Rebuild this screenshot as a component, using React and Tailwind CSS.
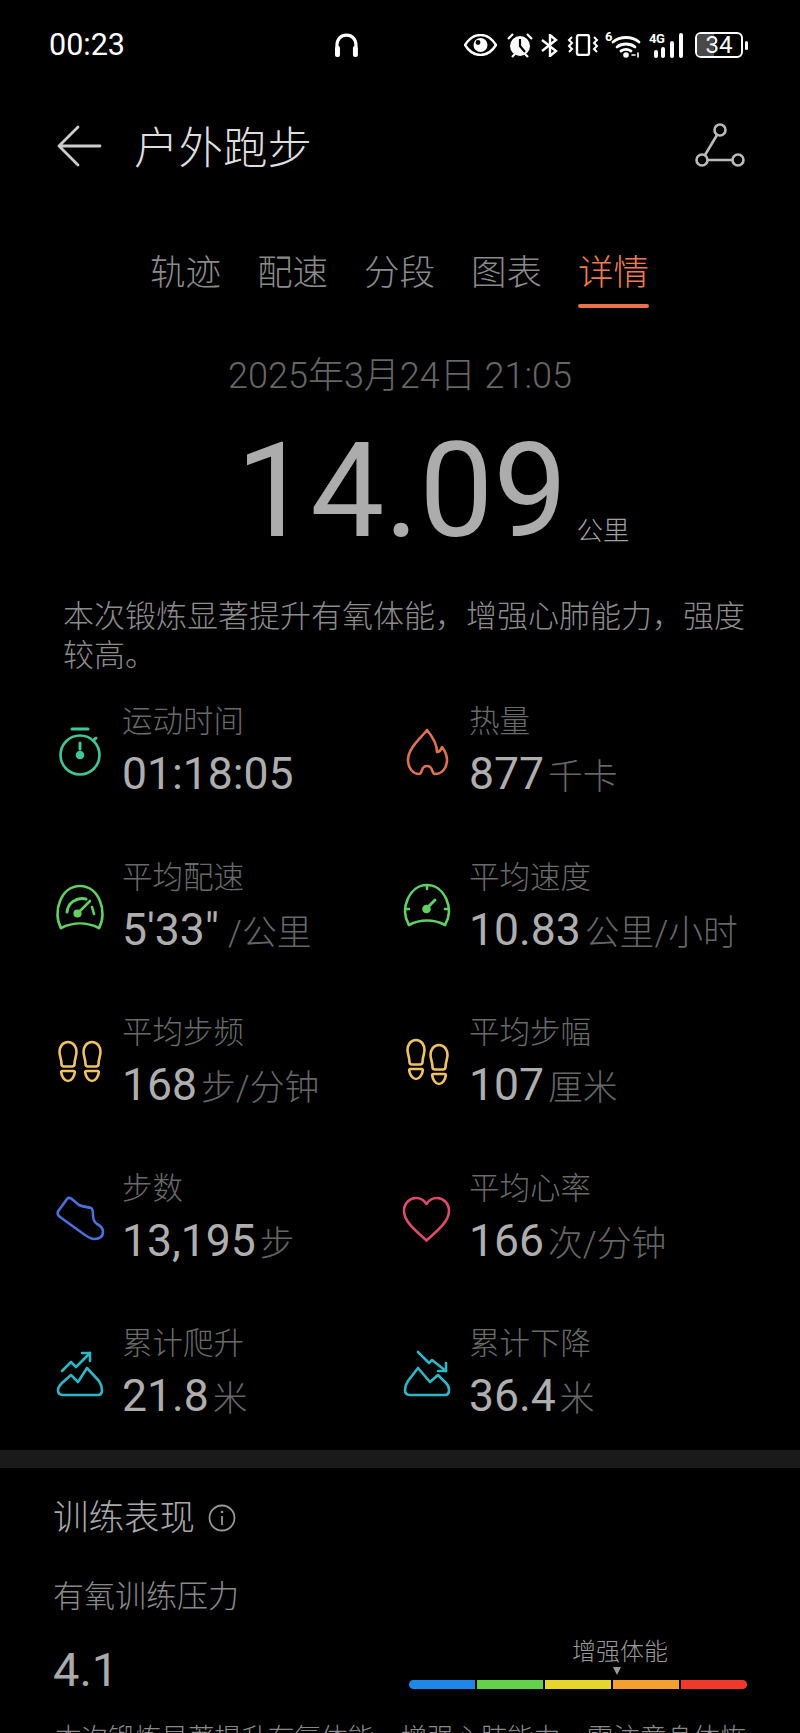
import React from "react";

function Ic({ children, cls }) {
  return (
    <svg viewBox="0 0 50 50" className={`w-[50px] h-[50px] shrink-0 overflow-visible ${cls}`} fill="none" stroke="currentColor" strokeWidth="2.6" strokeLinecap="round" strokeLinejoin="round">
      {children}
    </svg>
  );
}
const Stopwatch = () => (
  <Ic cls="text-[#3fc79b]">
    <path d="M17 1h16" strokeWidth="3" />
    <circle cx="25" cy="27" r="19.5" />
    <path d="M39 12l2-2" strokeWidth="3" />
    <path d="M25 15v6" strokeWidth="3" />
    <circle cx="25" cy="27" r="3" fill="currentColor" />
  </Ic>
);
const Flame = () => (
  <Ic cls="text-[#df7050]">
    <path d="M25 2C19 10 6 20 6 32c0 8 5 14 11 14 2 0 2-2 3-4 1-3 3-4 5-4s4 1 5 4c1 2 1 4 3 4 7 0 12-6 12-14 0-5-2-9-5-13-1 3-3 5-5 5 0-8-5-16-10-22z" />
  </Ic>
);
const GaugeA = () => (
  <Ic cls="text-[#62cf64]">
    <path d="M6 44C-3 28 6 2 25 2s28 26 19 42" />
    <path d="M6 44c12-6 26-6 38 0" />
    <path d="M12 28c1-9 9-15 19-13" strokeWidth="3" />
    <path d="M37 23l2 7" />
    <path d="M23 29l12-12" />
    <circle cx="22.5" cy="29.5" r="2.8" fill="currentColor" />
  </Ic>
);
const GaugeB = () => (
  <Ic cls="text-[#62cf64]">
    <path d="M7 41C-3 24 8 1 25 1s28 23 18 40" />
    <path d="M7 41c11-6 25-6 36 0" />
    <path d="M25 1v4M3 25h4M43 25h4" />
    <path d="M25 24l8-8" strokeWidth="3" />
    <circle cx="24.5" cy="25" r="3" fill="currentColor" />
  </Ic>
);
const Foot = ({ x, y }) => (
  <g transform={`translate(${x} ${y})`}>
    <path d="M9 0C3.500 0 .5 5 .5 10c0 4 2 7 2 12 0 1.500 1 2.500 2.500 2.500h8c1.500 0 2.500-1 2.500-2.500 0-5 2-8 2-12 0-5-3-10-8.500-10z" />
    <path d="M3.500 29h11c1 0 1.500 .5 1.300 1.500-.5 4-3.300 8.500-6.800 8.500s-6.300-4.500-6.800-8.500c-.2-1 .3-1.500 1.300-1.500z" />
  </g>
);
const FeetA = () => (
  <Ic cls="text-[#f0c162]">
    <Foot x={4} y={3} />
    <Foot x={28} y={3} />
  </Ic>
);
const FeetB = () => (
  <Ic cls="text-[#f0c162]">
    <Foot x={5} y={1} />
    <Foot x={28} y={6} />
  </Ic>
);
const Shoe = () => (
  <Ic cls="text-[#4a70dc]">
    <path d="M12 4c2-2 4-1 6 1l6 5c4 2 9 2 12 3 2 1 2 4 2 7 0 4 1 7 4 9 4 2 6 4 6 8 0 5-4 7-9 7-3 0-6-2-9-4L5 22c-3-2-3-5-1-7z" />
  </Ic>
);
const Heart = () => (
  <Ic cls="text-[#df4a6c]">
    <path d="M24.500 45.500C18 39 2 28 2 16 2 8 8 3 14 3c4 0 8 2 10.500 6C27 5 31 3 35 3c6 0 12 5 12 13 0 12-16 23-22.500 29.500z" />
  </Ic>
);
const Up = () => (
  <Ic cls="text-[#2db7c6]">
    <path d="M8 45c-4 0-5-2-5-5 0-3 2-5 4-7l9-8 7 7 9-14 12 13c2 3 3 5 3 9 0 3-1 5-4 5z" />
    <path d="M7 21l9-9 5 5L35 3" />
    <path d="M27 3h8v8" />
  </Ic>
);
const Down = () => (
  <Ic cls="text-[#2db7c6]">
    <path d="M8 45c-4 0-5-2-5-5 0-4 1-6 3-9l10-13 12 14 8-7 8 8c2 2 3 4 3 7 0 3-1 5-4 5z" />
    <path d="M16 2l11 11 3-3 14 11" />
    <path d="M44 13v8h-8" />
  </Ic>
);

function Metric({ icon, label, value, unit, slash }) {
  return (
    <div className="flex items-center gap-[17px] h-[102px]">
      {icon}
      <div className="flex flex-col">
        <div className="h-[40px] leading-[40px] text-[30.500px] font-light text-[#6a6a6a] whitespace-nowrap">{label}</div>
        <div className="h-[60px] mt-[2px] flex items-baseline whitespace-nowrap">
          <span className="text-[44.500px] leading-[60px] text-[#aeaeae]">{value}</span>
          <span className={`${slash ? "ml-[9px]" : "ml-[4px]"} text-[34.800px] font-light leading-[60px] text-[#666666]`}>{unit}</span>
        </div>
      </div>
    </div>
  );
}

function StatusIcons() {
  return (
    <div className="flex items-center text-white">
      <svg width="33" height="22" viewBox="0 0 33 22" className="mr-[10px]">
        <path d="M1 11C6 3 11 1 16.500 1S27 3 32 11c-5 8-10 10-15.500 10S6 19 1 11z" fill="none" stroke="currentColor" strokeWidth="2.400" />
        <circle cx="16.500" cy="11" r="7" fill="currentColor" />
        <circle cx="14" cy="8.500" r="2.400" fill="#000" />
      </svg>
      <svg width="26" height="25" viewBox="0 0 26 25" className="mr-[8px]" fill="currentColor">
        <circle cx="13" cy="13" r="10" />
        <path d="M13 6v7l5 6" stroke="#000" strokeWidth="2.200" fill="none" />
        <path d="M1 6l5-5M25 6l-5-5M5 24l3-3M21 24l-3-3" stroke="currentColor" strokeWidth="2.200" fill="none" />
      </svg>
      <svg width="18" height="23" viewBox="0 0 18 23" className="mr-[8px]" fill="none" stroke="currentColor" strokeWidth="2.400">
        <path d="M1 6l14 11-6 5V1l6 5L1 17" />
      </svg>
      <svg width="32" height="22" viewBox="0 0 32 22" className="mr-[6px]" fill="none" stroke="currentColor" strokeWidth="2">
        <rect x="10" y="1" width="12" height="20" rx="2" strokeWidth="2.400" />
        <path d="M5 3l-3 3 3 3-3 3 3 3-3 3M27 3l3 3-3 3 3 3-3 3 3 3" />
      </svg>
      <div className="relative w-[38px] h-[25px] mr-[6px]">
        <span className="absolute left-0 top-[-3px] text-[13px] leading-[14px] font-bold">6</span>
        <svg width="38" height="25" viewBox="0 0 38 25" fill="none" stroke="currentColor" strokeWidth="2.800" strokeLinecap="round">
          <path d="M8 9c7-6 19-6 26 0M12 14c5-4 13-4 18 0M16 18c3-2 7-2 10 0" />
          <circle cx="21" cy="22" r="2.800" fill="currentColor" stroke="none" />
          <path d="M27 22h3M33 20v4" strokeWidth="1.600" />
        </svg>
      </div>
      <div className="relative w-[37px] h-[25px] mr-[9px]">
        <span className="absolute left-0 top-[-1px] text-[13px] leading-[14px] font-bold tracking-[-0.5px]">4G</span>
        <svg width="37" height="25" viewBox="0 0 37 25" fill="currentColor">
          <rect x="5" y="17" width="4" height="8" rx="2" />
          <rect x="12" y="14" width="4" height="11" rx="2" />
          <rect x="21" y="8" width="4" height="17" rx="2" />
          <rect x="30" y="0" width="4" height="25" rx="2" />
        </svg>
      </div>
      <div className="relative w-[48px] h-[26px] rounded-[6px] border-2 border-white overflow-hidden flex items-center justify-center">
        <div className="absolute left-0 top-0 bottom-0 w-[17px] bg-[#4a4a4a]" />
        <span className="relative text-[24px] leading-none">34</span>
      </div>
      <div className="ml-[2px] w-[3px] h-[9px] rounded-full bg-white" />
    </div>
  );
}

export default function App() {
  const tabs = ["轨迹", "配速", "分段", "图表"];
  return (
    <div className="w-[800px] h-[1733px] overflow-hidden bg-black font-['Roboto','Noto_Sans_CJK_SC',sans-serif]">
      <div className="h-[90px] pl-[49px] pr-[52px] flex items-center justify-between">
        <span className="w-[286px] text-[30.500px] text-white leading-none">00:23</span>
        <svg width="25" height="25" viewBox="0 0 25 25" className="mr-[105px]" fill="none">
          <path d="M3 14v-2C3 6 7 2 12.500 2S22 6 22 12v2" strokeWidth="3.200" stroke="#fff" />
          <rect x="1" y="13" width="5" height="11" rx="2" fill="#fff" />
          <rect x="19" y="13" width="5" height="11" rx="2" fill="#fff" />
        </svg>
        <StatusIcons />
      </div>

      <div className="mt-[26px] h-[60px] pl-[56px] pr-[54px] flex items-center">
        <svg width="46" height="42" viewBox="0 0 46 42" fill="none" stroke="#cccccc" strokeWidth="2.800" strokeLinecap="round" strokeLinejoin="round">
          <path d="M22 2L3 21l19 19M3 21h41" />
        </svg>
        <span className="ml-[32px] mt-[5px] text-[44.500px] leading-[60px] text-[#dddddd] font-light">户外跑步</span>
        <svg width="52" height="46" viewBox="0 0 52 46" className="ml-auto" fill="none" stroke="#bbbbbb" strokeWidth="2.600">
          <circle cx="26" cy="7" r="5.500" />
          <circle cx="8" cy="37" r="5.500" />
          <circle cx="44" cy="37" r="5.500" />
          <path d="M23 12L11 32M14 37h24" />
        </svg>
      </div>

      <div className="mt-[77px] pl-[150px] flex gap-[37px] h-[40px] items-center">
        {tabs.map((t) => (
          <span key={t} className="w-[70px] text-[35.500px] font-light leading-[40px] text-[#8a8a8a] whitespace-nowrap">{t}</span>
        ))}
        <span className="w-[70px] text-[35.500px] leading-[40px] font-light text-[#f07b52] whitespace-nowrap">详情</span>
      </div>
      <div className="mt-[11px] ml-[578px] w-[71px] h-[4px] rounded-full bg-[#e9714c]" />

      <div className="mt-[48px] text-center h-[40px] leading-[40px] text-[36px] font-light text-[#666666]">2025年3月24日 21:05</div>

      <div className="mt-[30px] h-[130px] pl-[236px] flex items-baseline">
        <span className="text-[132px] font-normal leading-[130px] text-[#acacac]">14.09</span>
        <span className="ml-[9px] translate-y-[4px] text-[26.500px] leading-[40px] text-[#a0a0a0] font-light">公里</span>
      </div>

      <p className="mt-[42px] ml-[63px] w-[690px] text-[31px] leading-[38.500px] font-light text-[#8c8c8c]">
        本次锻炼显著提升有氧体能，增强心肺能力，强度较高。
      </p>

      <div className="mt-[27px] pl-[55px] grid grid-cols-[347px_1fr] gap-y-[53.500px]">
        <Metric icon={<Stopwatch />} label="运动时间" value="01:18:05" unit="" />
        <Metric icon={<Flame />} label="热量" value="877" unit="千卡" />
        <Metric icon={<GaugeA />} label="平均配速" value={`5'33"`} unit="/公里" slash />
        <Metric icon={<GaugeB />} label="平均速度" value="10.83" unit="公里/小时" />
        <Metric icon={<FeetA />} label="平均步频" value="168" unit="步/分钟" />
        <Metric icon={<FeetB />} label="平均步幅" value="107" unit="厘米" />
        <Metric icon={<Shoe />} label="步数" value="13,195" unit="步" />
        <Metric icon={<Heart />} label="平均心率" value="166" unit="次/分钟" />
        <Metric icon={<Up />} label="累计爬升" value="21.8" unit="米" />
        <Metric icon={<Down />} label="累计下降" value="36.4" unit="米" />
      </div>

      <div className="mt-[24px] h-[18px] bg-[#1a1a1a]" />

      <div className="mt-[28px] pl-[53px] h-[44px] flex items-center">
        <span className="text-[35.500px] font-light leading-[44px] text-[#a8a8a8]">训练表现</span>
        <svg width="28" height="28" viewBox="0 0 28 28" className="ml-[13px]" fill="none" stroke="#999999" strokeWidth="1.800">
          <circle cx="14" cy="14" r="12.500" />
          <path d="M14 12v9" />
          <circle cx="14" cy="8" r="1.300" fill="#999999" stroke="none" />
        </svg>
      </div>

      <div className="mt-[37px] pl-[53px] h-[40px] leading-[40px] text-[31px] font-light text-[#8a8a8a]">有氧训练压力</div>

      <div className="mt-[20px] pl-[53px] pr-[53px] flex justify-between items-start">
        <div className="mt-[3px] h-[60px] text-[47px] leading-[60px] text-[#aaaaaa]">4.1</div>
        <div className="w-[338px]">
          <div className="ml-[163px] h-[30px] leading-[30px] text-[24px] font-light text-[#9a9a9a] whitespace-nowrap">增强体能</div>
          <svg width="8" height="8" viewBox="0 0 8 8" className="ml-[204px] block">
            <path d="M0 0h8L4 8z" fill="#9a9a9a" />
          </svg>
          <div className="mt-[5px] flex gap-[2px] h-[9px]">
            <div className="flex-1 rounded-l-full bg-[#1f87e8]" />
            <div className="flex-1 bg-[#62d24a]" />
            <div className="flex-1 bg-[#e6d52c]" />
            <div className="flex-1 bg-[#f4a030]" />
            <div className="flex-1 rounded-r-full bg-[#ef3a2b]" />
          </div>
        </div>
      </div>

      <p className="mt-[18px] pl-[55px] w-[800px] h-[40px] leading-[40px] text-[26.600px] font-light text-[#8a8a8a] whitespace-nowrap">
        本次锻炼显著提升有氧体能，增强心肺能力，需注意身体恢
      </p>
    </div>
  );
}
